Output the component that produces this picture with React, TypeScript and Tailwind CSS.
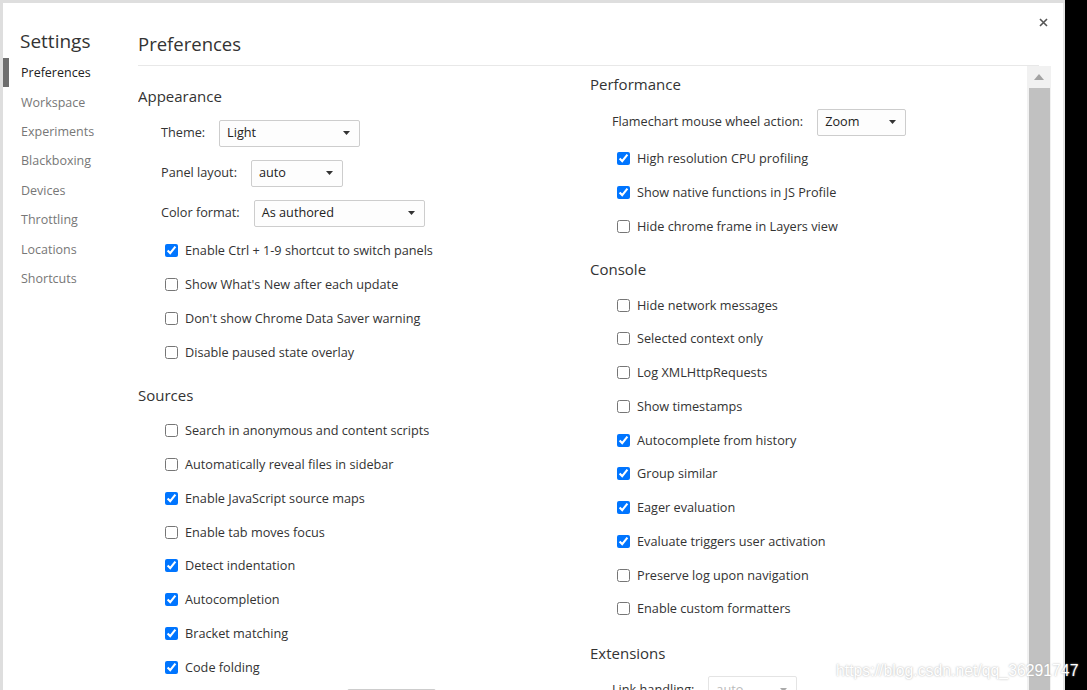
import React from "react";

const navItems = [
  "Preferences",
  "Workspace",
  "Experiments",
  "Blackboxing",
  "Devices",
  "Throttling",
  "Locations",
  "Shortcuts",
];

function Caret({ dim }: { dim?: boolean }) {
  return (
    <svg width="7" height="4" viewBox="0 0 7 4" className="shrink-0">
      <path d="M0 0h7L3.5 4z" fill={dim ? "#aaa" : "#333"} />
    </svg>
  );
}

function Select({ value, className, dim }: { value: string; className: string; dim?: boolean }) {
  return (
    <div
      className={`h-[27px] flex items-center justify-between pl-[7px] pr-[9px] border rounded-[2px] ${
        dim ? "border-[#e4e4e4] text-[#bbb] bg-white" : "border-[#cdcdcd] text-[#222] bg-[#fdfdfd]"
      } ${className}`}
    >
      <span>{value}</span>
      <Caret dim={dim} />
    </div>
  );
}

function SelectRow({ label, value, selectClass }: { label: string; value: string; selectClass: string }) {
  return (
    <div className="h-[40px] flex items-center pl-[23px]">
      <span className="mr-[14px] whitespace-nowrap">{label}</span>
      <Select value={value} className={selectClass} />
    </div>
  );
}

function Check({ label, checked }: { label: string; checked?: boolean }) {
  return (
    <label className="h-[33.75px] flex items-center pl-[27px]">
      <input type="checkbox" checked={!!checked} readOnly className="w-[13px] h-[13px] m-0 shrink-0" />
      <span className="ml-[7px] whitespace-nowrap">{label}</span>
    </label>
  );
}

function Heading({ children }: { children: React.ReactNode }) {
  return <div className="h-[20px] flex items-center text-[15px] text-[#333]">{children}</div>;
}

export default function App() {
  return (
    <div className="w-[1087px] h-[690px] flex bg-black overflow-hidden font-['Open_Sans',sans-serif] text-[12.7px] text-[#333] relative">
      {/* dialog frame */}
      <div className="w-[1065px] h-full bg-[#dedede] pl-[3px] pt-[3px]">
        <div className="h-full bg-white border-r-2 border-[#e6e6e6] flex">
          {/* sidebar */}
          <div className="w-[135px] shrink-0">
            <div className="h-[55px] pt-[25px] pl-[17px] text-[19px] leading-[26px] text-[#333]">Settings</div>
            <div className="text-[12.5px]">
              {navItems.map((item, i) => (
                <div
                  key={item}
                  className={`h-[29.4px] flex items-center pl-[12px] pt-[2px] border-l-[6px] ${
                    i === 0 ? "border-[#6e6e6e] text-[#222]" : "border-transparent text-[#777]"
                  }`}
                >
                  {item}
                </div>
              ))}
            </div>
          </div>

          {/* main */}
          <div className="flex-1 flex flex-col min-w-0">
            <div className="h-[63px] flex items-start pt-[28px] pr-[24px] relative">
              <div className="w-[912px] h-full border-b border-[#e8e8e8] text-[18.5px] leading-[26px] text-[#333]">
                Preferences
              </div>
              <svg width="9" height="9" viewBox="0 0 9 9" className="absolute right-[15px] top-[15px]">
                <path d="M1 1l7 7M8 1L1 8" stroke="#555" strokeWidth="1.6" />
              </svg>
            </div>

            <div className="flex-1 flex min-h-0 overflow-hidden">
              <div className="w-[889px] flex">
                {/* left column */}
                <div className="w-[452px] pt-[20px]">
                  <Heading>Appearance</Heading>
                  <div className="mt-[7px] mb-[1px]">
                    <SelectRow label="Theme:" value="Light" selectClass="w-[141px]" />
                    <SelectRow label="Panel layout:" value="auto" selectClass="w-[92px]" />
                    <SelectRow label="Color format:" value="As authored" selectClass="w-[171px]" />
                  </div>
                  <Check label="Enable Ctrl + 1-9 shortcut to switch panels" checked />
                  <Check label="Show What's New after each update" />
                  <Check label="Don't show Chrome Data Saver warning" />
                  <Check label="Disable paused state overlay" />

                  <div className="mt-[16px]">
                    <Heading>Sources</Heading>
                  </div>
                  <div className="mt-[9px]">
                    <Check label="Search in anonymous and content scripts" />
                    <Check label="Automatically reveal files in sidebar" />
                    <Check label="Enable JavaScript source maps" checked />
                    <Check label="Enable tab moves focus" />
                    <Check label="Detect indentation" checked />
                    <Check label="Autocompletion" checked />
                    <Check label="Bracket matching" checked />
                    <Check label="Code folding" checked />
                    <div className="h-[36px] flex items-center pl-[23px]">
                      <span className="w-[171px] mr-[15px]" />
                      <Select value="" className="w-[89px]" />
                    </div>
                  </div>
                </div>

                {/* right column */}
                <div className="flex-1 pt-[8px]">
                  <Heading>Performance</Heading>
                  <div className="mt-[8px]">
                    <div className="h-[40px] flex items-center pl-[22px]">
                      <span className="mr-[14px] whitespace-nowrap">Flamechart mouse wheel action:</span>
                      <Select value="Zoom" className="w-[89px]" />
                    </div>
                  </div>
                  <Check label="High resolution CPU profiling" checked />
                  <Check label="Show native functions in JS Profile" checked />
                  <Check label="Hide chrome frame in Layers view" />

                  <div className="mt-[16px]">
                    <Heading>Console</Heading>
                  </div>
                  <div className="mt-[9px]">
                    <Check label="Hide network messages" />
                    <Check label="Selected context only" />
                    <Check label="Log XMLHttpRequests" />
                    <Check label="Show timestamps" />
                    <Check label="Autocomplete from history" checked />
                    <Check label="Group similar" checked />
                    <Check label="Eager evaluation" checked />
                    <Check label="Evaluate triggers user activation" checked />
                    <Check label="Preserve log upon navigation" />
                    <Check label="Enable custom formatters" />
                  </div>

                  <div className="mt-[17px]">
                    <Heading>Extensions</Heading>
                  </div>
                  <div className="h-[40px] flex items-center pl-[22px] mt-[7px]">
                    <span className="mr-[14px] whitespace-nowrap">Link handling:</span>
                    <Select value="auto" className="w-[89px]" dim />
                  </div>
                </div>
              </div>

              {/* scrollbar */}
              <div className="w-[24px] bg-[#f1f1f1] flex flex-col items-center shrink-0">
                <div className="h-[22px] flex items-center justify-center">
                  <svg width="10" height="6" viewBox="0 0 10 6">
                    <path d="M0 6L5 0l5 6z" fill="#a3a3a3" />
                  </svg>
                </div>
                <div className="w-[21px] flex-1 bg-[#c1c1c1]" />
              </div>
              <div className="w-[12px] shrink-0" />
            </div>
          </div>
        </div>
      </div>

      {/* watermark */}
      <div className="absolute left-[836px] top-[659px] font-['Liberation_Sans',Arial,sans-serif] text-[15.8px] text-white [text-shadow:0_0_2px_#a8a8a8] whitespace-nowrap">
        https://blog.csdn.net/qq_36291747
      </div>
    </div>
  );
}
